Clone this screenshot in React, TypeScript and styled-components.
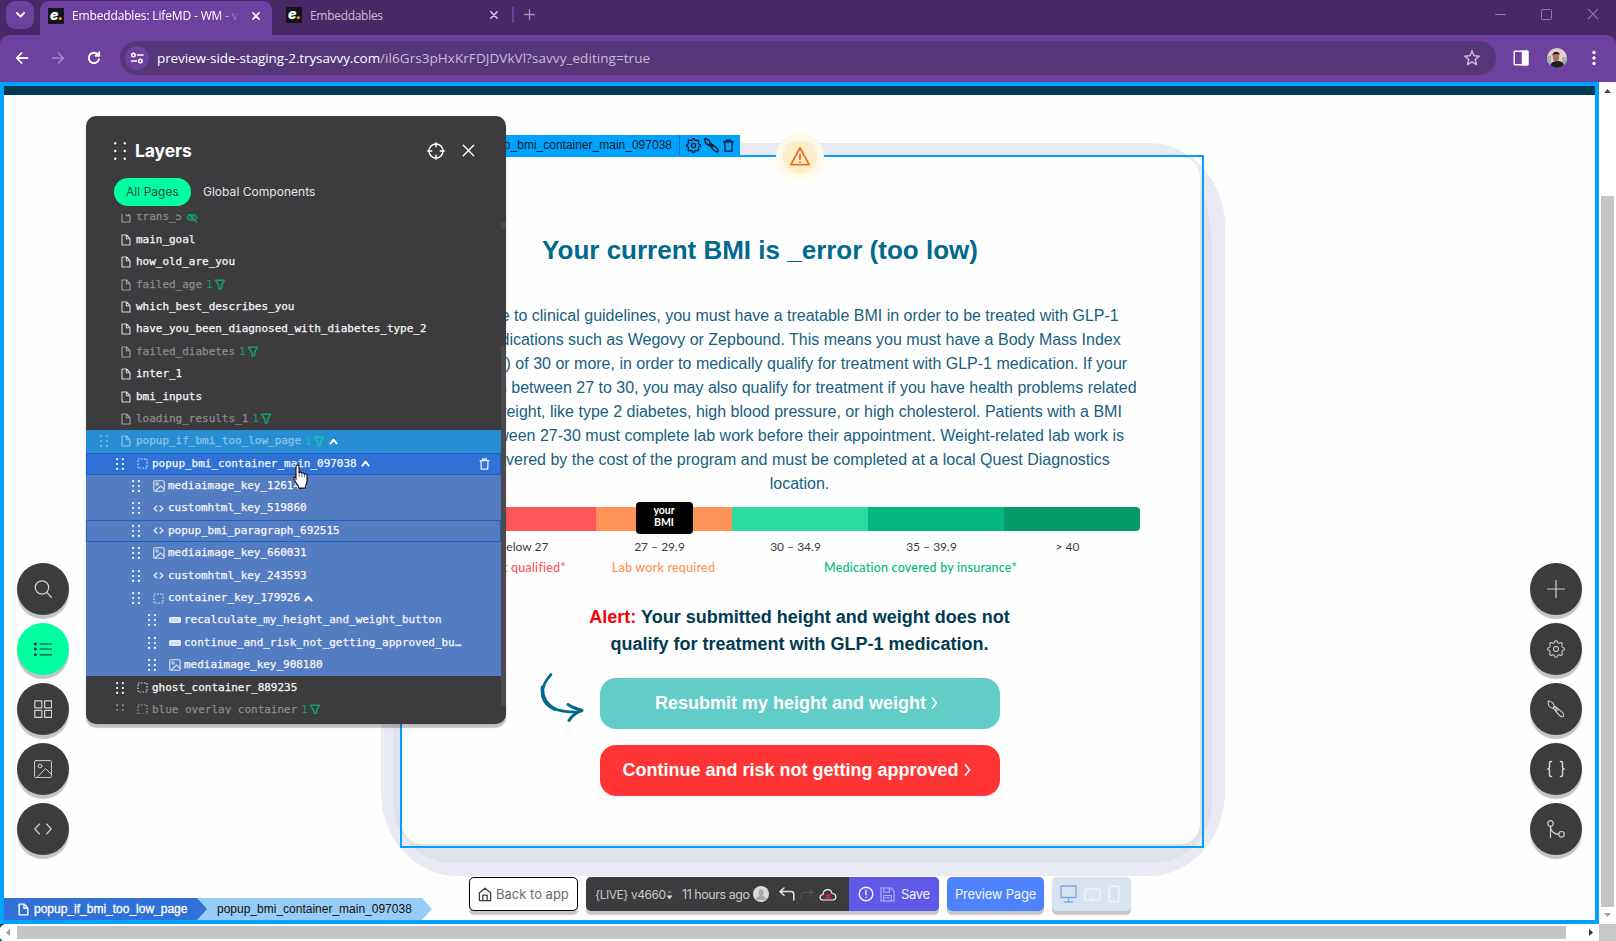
import React from "react";
import styled, { createGlobalStyle, css } from "styled-components";

const BLUE = "#00a2ff";
const DARK = "#3c3c3e";

const Global = createGlobalStyle`
  * { box-sizing: border-box; }
  html, body { margin: 0; padding: 0; background: #fff; overflow: hidden; }
  svg { display: block; flex: none; }
`;

const Window = styled.div`
  width: 1616px;
  height: 941px;
  display: flex;
  flex-direction: column;
  background: #fefefe;
  font-family: "Liberation Sans", Arial, sans-serif;
  overflow: hidden;
`;

/* ---------- Browser chrome ---------- */

const TabStrip = styled.div`
  height: 35px;
  display: flex;
  align-items: flex-start;
  background: #472967;
  padding-left: 6px;
  font-family: "Open Sans", "Noto Sans", sans-serif;
  font-size: 12px;
`;

const TabSearch = styled.div`
  width: 28px;
  height: 28px;
  margin: 1px 6px 0 0;
  border-radius: 9px;
  background: #6e409f;
  display: flex;
  align-items: center;
  justify-content: center;
`;

const Tab = styled.div<{ $active?: boolean }>`
  height: ${(p) => (p.$active ? 34 : 30)}px;
  width: ${(p) => (p.$active ? 232 : 226)}px;
  margin-top: ${(p) => (p.$active ? 1 : 0)}px;
  margin-left: ${(p) => (p.$active ? 0 : 7)}px;
  padding: ${(p) => (p.$active ? "0 12px 5px 8px" : "0 7px 0 7px")};
  display: flex;
  align-items: center;
  color: ${(p) => (p.$active ? "#fff" : "#c9bfd4")};
  background: ${(p) => (p.$active ? "#6e409f" : "transparent")};
  border-radius: 9px 9px 0 0;
`;

const Favicon = styled.div`
  width: 16px;
  height: 16px;
  background: #11151c;
  color: #fff;
  font: italic 900 14px/13px "Inter", sans-serif;
  padding-left: 2px;
  letter-spacing: -0.5px;
  span { color: #ffa51f; }
`;

const TabTitle = styled.div<{ $fade?: boolean }>`
  flex: 1;
  margin-left: 8px;
  white-space: nowrap;
  overflow: hidden;
  letter-spacing: ${(p) => (p.$fade ? -0.15 : -0.3)}px;
  ${(p) =>
    p.$fade &&
    css`
      flex: none;
      width: 172px;
      mask-image: linear-gradient(90deg, #000 145px, transparent 170px);
    `}
`;

const TabSpacer = styled.div`
  flex: 1;
`;

const NewTab = styled.div`
  display: flex;
  align-items: center;
  height: 29px;
  margin-left: 7px;
  gap: 10px;
`;

const Divider = styled.i`
  width: 2px;
  height: 16px;
  background: #6e409f;
`;

const WindowControls = styled.div`
  margin-left: auto;
  margin-right: 17px;
  height: 28px;
  display: flex;
  align-items: center;
  gap: 35px;
`;

const Toolbar = styled.div`
  height: 47px;
  display: flex;
  align-items: center;
  background: #6e409f;
  border-radius: 9px 9px 0 0;
  padding: 0 20px 1px 14px;
`;

const ToolbarBack = styled.div`
  background: #472967;
`;

const NavIcons = styled.div`
  display: flex;
  gap: 20px;
  align-items: center;
`;

const Omnibox = styled.div`
  margin-left: 18px;
  width: 1376px;
  height: 34px;
  border-radius: 17px;
  background: #55387a;
  display: flex;
  align-items: center;
  padding: 0 15px 0 5px;
`;

const SiteInfo = styled.div`
  width: 24px;
  height: 24px;
  border-radius: 50%;
  background: #6e409f;
  display: flex;
  align-items: center;
  justify-content: center;
`;

const Url = styled.div`
  flex: 1;
  margin-left: 8px;
  color: #fff;
  font: 13.5px "Open Sans", "Noto Sans", sans-serif;
  letter-spacing: -0.1px;
  span { color: #c8bcd6; letter-spacing: 0.06px; }
`;

const ToolbarRight = styled.div`
  flex: 1;
  display: flex;
  align-items: center;
  justify-content: flex-end;
`;

const ProfilePhoto = styled.svg`
  margin: 0 25px 0 18px;
`;

/* ---------- Viewport and scrollbars ---------- */

const Viewport = styled.div`
  flex: 1;
  display: grid;
  grid-template-columns: 1599px 17px;
  grid-template-rows: 842px 17px;
`;

const Frame = styled.div`
  position: relative;
  border: 4px solid ${BLUE};
  background: #fefefe;
  overflow: hidden;
`;

const TopStrip = styled.div`
  height: 9px;
  background: #003b50;
`;

const VScroll = styled.div`
  padding: 7px 2px 0;
  display: flex;
  flex-direction: column;
  align-items: center;
  background: #fff;
`;

const VThumb = styled.div`
  width: 13px;
  height: 711px;
  margin: 103px 0 6px;
  background: #c3c4c6;
`;

const HScroll = styled.div`
  display: flex;
  align-items: center;
  background: radial-gradient(circle at 8px 9px, #fff 9px, transparent 10px) 0 0 / 8px 17px no-repeat,
    linear-gradient(90deg, #0b5a49 8px, #fff 8px);
`;

const HThumb = styled.div`
  width: 1549px;
  height: 13px;
  margin: 0 23px 0 7px;
  background: #c3c4c6;
`;

const HArrow = styled.svg<{ $lead?: boolean }>`
  margin-left: ${(p) => (p.$lead ? 6 : 0)}px;
`;

const Grip = styled.div`
  background: #c6c7c9;
`;

/* ---------- Popup card ---------- */

const Stage = styled.div`
  display: flex;
  justify-content: center;
  padding: 48px 0 0 7px;
`;

const Halo = styled.div`
  width: 844px;
  height: 733px;
  padding: 12px 13px 13px 12px;
  border-radius: 76px / 84px;
  background: #e9eaf3;
`;

const HaloInner = styled.div`
  height: 708px;
  padding: 0 8px 15px 7px;
  border-radius: 40px 40px 60px 60px / 100px 100px 60px 60px;
  background: #dfe1eb;
`;

const Selection = styled.div`
  position: relative;
  height: 693px;
  border: 2px solid ${BLUE};
  padding: 0 2px 2px 0;
`;

const Card = styled.div`
  height: 100%;
  border-radius: 20px;
  background: #fefefe;
  padding: 76px 3px 0 0;
  display: flex;
  flex-direction: column;
  align-items: center;
`;

const SelectionTag = styled.div`
  position: absolute;
  right: 462px;
  top: -22px;
  height: 20px;
  display: flex;
  align-items: center;
  background: ${BLUE};
  color: #061d2c;
  font-size: 12px;
  padding-left: 9px;
`;

const TagIcons = styled.div`
  height: 20px;
  margin-left: 7px;
  padding: 0 5px 0 6px;
  border-left: 1px solid #0b6fb0;
  display: flex;
  align-items: center;
  gap: 3px;
`;

const WarningBadge = styled.div`
  position: absolute;
  left: 374px;
  top: -24px;
  width: 48px;
  height: 48px;
  border-radius: 50%;
  border: 7px solid #fff9e8;
  background: #fdedcb;
  display: flex;
  align-items: center;
  justify-content: center;
`;

const Title = styled.h1`
  margin: 0 79px 0 0;
  font-size: 26px;
  line-height: 34px;
  font-weight: 700;
  color: #006a8d;
  white-space: nowrap;
`;

const Paragraph = styled.p`
  margin: 37px 0 11px;
  text-align: center;
  font-size: 16px;
  line-height: 24px;
  color: #176180;
  white-space: pre;
`;

const Scale = styled.div`
  position: relative;
  width: 680px;
  height: 24px;
  display: flex;
  border-radius: 4px;
  overflow: visible;
`;

const Segment = styled.div<{ $color: string }>`
  flex: 1;
  background: ${(p) => p.$color};
  &:first-child { border-radius: 4px 0 0 4px; }
  &:nth-child(5) { border-radius: 0 4px 4px 0; }
`;

const Marker = styled.div`
  position: absolute;
  left: 176px;
  top: -5px;
  width: 57px;
  height: 32px;
  border-radius: 4px;
  background: #000;
  color: #fff;
  font: 700 10.5px/12px "Lato", sans-serif;
  text-align: center;
  padding-top: 2px;
`;

const Ranges = styled.div`
  width: 680px;
  height: 20px;
  margin-top: 6px;
  display: flex;
  font: 12px/20px "Lato", sans-serif;
  color: #3c3c3e;
`;

const Range = styled.div`
  flex: 1;
  text-align: center;
  padding-right: 8px;
`;

const Notes = styled.div`
  width: 680px;
  height: 20px;
  margin-top: 1px;
  display: flex;
  font: 500 12.5px/20px "Lato", sans-serif;
  letter-spacing: 0.22px;
`;

const Note = styled.div<{ $color: string; $w: number; $shift: number }>`
  width: ${(p) => p.$w}px;
  padding-right: ${(p) => p.$shift}px;
  text-align: center;
  white-space: nowrap;
  color: ${(p) => p.$color};
`;

const Alert = styled.p`
  margin: 26px 0 20px;
  text-align: center;
  font-weight: 700;
  font-size: 18px;
  line-height: 27px;
  color: #003b50;
  span { color: #fb0007; }
`;

const Actions = styled.div`
  position: relative;
  display: flex;
  flex-direction: column;
  gap: 16px;
`;

const Action = styled.div<{ $color: string }>`
  width: 400px;
  height: 51px;
  border-radius: 16px;
  background: ${(p) => p.$color};
  color: #fff;
  font-weight: 700;
  font-size: 18px;
  display: flex;
  align-items: center;
  justify-content: center;
  gap: 5px;
  padding-bottom: 1px;
  padding-right: 6px;
`;

const ArrowDoodle = styled.div`
  position: absolute;
  left: -60px;
  top: -5px;
`;

/* ---------- Layers panel ---------- */

const Panel = styled.div`
  position: absolute;
  left: 82px;
  top: 30px;
  width: 420px;
  height: 608px;
  border-radius: 10px;
  background: ${DARK};
  box-shadow: 0 4px 1px rgba(0, 0, 0, 0.22), 0 1px 3px rgba(0, 0, 0, 0.1);
  font-family: "Inter", sans-serif;
  padding-top: 20px;
`;

const PanelHeader = styled.div`
  height: 29px;
  padding: 0 31px 0 28px;
  display: flex;
  align-items: center;
  color: #fff;
`;

const PanelTitle = styled.div`
  flex: 1;
  margin-left: 9px;
  font-size: 17.5px;
  font-weight: 700;
  letter-spacing: -0.1px;
`;

const HeaderActions = styled.div`
  display: flex;
  align-items: center;
  gap: 17px;
`;

const PanelTabs = styled.div`
  display: flex;
  align-items: center;
  margin: 13px 0 8px 28px;
`;

const PanelTab = styled.div<{ $active?: boolean }>`
  height: 28px;
  line-height: 27px;
  border-radius: 14px;
  padding: 0 12px;
  font-size: 12px;
  letter-spacing: 0.04px;
  background: ${(p) => (p.$active ? "#00ffa0" : "transparent")};
  color: ${(p) => (p.$active ? "#1d4a3c" : "#e4e4e4")};
`;

const LayerArea = styled.div`
  display: flex;
  height: 500px;
`;

const LayerList = styled.div`
  width: 415px;
  overflow: hidden;
`;

const LayerInner = styled.div`
  margin-top: -7.8px;
`;

const LayerTrack = styled.div`
  width: 5px;
  padding-top: 8px;
  &::before {
    content: "";
    display: block;
    height: 7px;
    background: #4a4a4c;
  }
  &::after {
    content: "";
    display: block;
    height: 360px;
    margin-top: 117px;
    background: #4b4b4d;
  }
`;

type Tone = "plain" | "page" | "selected" | "child" | "outlined";
const toneBg: Record<Tone, string> = {
  plain: "transparent",
  page: "#288dd2",
  selected: "#2f71d7",
  child: "#547cc3",
  outlined: "#547cc3",
};

const LayerRow = styled.div<{ $level: number; $tone: Tone; $dim?: boolean }>`
  height: 22.4px;
  padding-left: ${(p) => 14 + 16 * p.$level}px;
  padding-right: 11px;
  display: flex;
  align-items: center;
  font-family: "DejaVu Sans Mono", monospace;
  font-size: 11px;
  letter-spacing: -0.02px;
  white-space: nowrap;
  background: ${(p) => toneBg[p.$tone]};
  color: ${(p) => (p.$tone === "page" ? "#8cc3ea" : p.$dim ? "#8b8b8c" : "#f6f6f6")};
  box-shadow: ${(p) =>
    p.$tone === "selected" || p.$tone === "outlined" ? "inset 0 0 0 1px #1f5fc4" : "none"};
`;

const RowDots = styled.div`
  width: 21px;
`;

const RowIcon = styled.div<{ $dim?: boolean }>`
  width: 15px;
  opacity: ${(p) => (p.$dim ? 0.55 : 0.85)};
  color: #f2f2f2;
`;

const RowName = styled.span`
  line-height: 22px;
  -webkit-text-stroke: 0.25px currentColor;
`;

const Condition = styled.span<{ $bright?: boolean }>`
  margin-left: 4px;
  display: flex;
  align-items: center;
  color: ${(p) => (p.$bright ? "#13c4b0" : "#179b6d")};
  gap: 1px;
`;

const RowCaret = styled.span`
  margin-left: 4px;
  color: #fff;
`;

const RowTrash = styled.span`
  margin-left: auto;
  color: #e8effb;
`;

/* ---------- Floating controls ---------- */

const FabColumn = styled.div<{ $side: "left" | "right" }>`
  position: absolute;
  top: 477px;
  ${(p) => p.$side}: 13px;
  display: flex;
  flex-direction: column;
  gap: 8px;
`;

const Fab = styled.div<{ $active?: boolean }>`
  width: 52px;
  height: 52px;
  border-radius: 50%;
  background: ${(p) => (p.$active ? "#00ffa0" : DARK)};
  color: ${(p) => (p.$active ? "#1f3d33" : "#d2d2d4")};
  box-shadow: 0 4px 1px rgba(0, 0, 20, 0.23);
  display: flex;
  align-items: center;
  justify-content: center;
`;

const BottomBar = styled.div`
  position: absolute;
  left: 465px;
  top: 791px;
  height: 34px;
  display: flex;
  gap: 8px;
  font-family: "Inter", sans-serif;
  font-size: 13px;
  letter-spacing: -0.3px;
`;

const barShadow = "0 4px 1px rgba(0, 0, 20, 0.22)";

const BackButton = styled.div`
  width: 109px;
  border: 1px solid #000;
  border-radius: 5px;
  background: #fff;
  color: #6a6a6e;
  display: flex;
  align-items: center;
  gap: 4px;
  padding-left: 8px;
  box-shadow: ${barShadow};
  white-space: nowrap;
  letter-spacing: 0;
`;

const VersionBar = styled.div`
  width: 353px;
  display: flex;
  border-radius: 5px;
  overflow: hidden;
  background: ${DARK};
  color: #c9c9cb;
`;

const VersionShadow = styled.div`
  border-radius: 5px;
  box-shadow: ${barShadow};
  display: flex;
`;

const VersionInfo = styled.div`
  width: 263px;
  display: flex;
  align-items: center;
  padding-left: 9px;
  white-space: nowrap;
`;

const VersionName = styled.span`
  width: 71px;
  font-size: 12px;
  letter-spacing: -0.45px;
`;

const Ago = styled.span`
  width: 71px;
  margin-left: 9px;
  font-size: 12.5px;
  letter-spacing: -0.45px;
`;

const HistoryIcons = styled.div`
  display: flex;
  align-items: center;
  gap: 5px;
`;

const Avatar = styled.div`
  width: 16px;
  height: 16px;
  border-radius: 50%;
  overflow: hidden;
  margin-right: 10px;
`;

const SaveButton = styled.div`
  flex: 1;
  display: flex;
  align-items: center;
  background: #5f59e8;
  color: #f3f2ff;
  gap: 6px;
  padding-left: 9px;
`;

const PreviewButton = styled.div`
  width: 97px;
  border-radius: 5px;
  background: #4f83fd;
  color: #f1f5ff;
  display: flex;
  align-items: center;
  justify-content: center;
  box-shadow: ${barShadow};
  white-space: nowrap;
  letter-spacing: -0.2px;
`;

const Devices = styled.div`
  width: 79px;
  border-radius: 5px;
  background: #d9e3ef;
  display: flex;
  align-items: center;
  gap: 7px;
  padding-left: 8px;
  box-shadow: ${barShadow};
`;

const Breadcrumbs = styled.div`
  position: absolute;
  left: 0;
  bottom: 0;
  height: 22px;
  display: flex;
  font-size: 12px;
  line-height: 22px;
`;

const Crumb = styled.div<{ $primary?: boolean }>`
  width: ${(p) => (p.$primary ? 203 : 235)}px;
  margin-left: ${(p) => (p.$primary ? 0 : -10)}px;
  padding-left: ${(p) => (p.$primary ? 14 : 20)}px;
  z-index: ${(p) => (p.$primary ? 2 : 1)};
  display: flex;
  align-items: center;
  gap: 5px;
  background: ${(p) => (p.$primary ? "#2f71d7" : "#98cbf5")};
  color: ${(p) => (p.$primary ? "#fff" : "#111")};
  ${(p) => p.$primary && "-webkit-text-stroke: 0.3px #fff;"}
  clip-path: polygon(0 0, calc(100% - 10px) 0, 100% 50%, calc(100% - 10px) 100%, 0 100%);
`;

const Pointer = styled.div`
  position: absolute;
  left: 289px;
  top: 378px;
`;

/* ---------- Icons ---------- */

type IcoProps = {
  size?: number;
  w?: number;
  h?: number;
  box?: string;
  sw?: number;
  fill?: string;
  color?: string;
  children: React.ReactNode;
};
const Ico = ({ size = 16, w, h, box = "0 0 16 16", sw = 1, fill = "none", color, children }: IcoProps) => (
  <svg
    width={w ?? size}
    height={h ?? size}
    viewBox={box}
    fill={fill}
    stroke={color ?? "currentColor"}
    strokeWidth={sw}
    strokeLinecap="round"
    strokeLinejoin="round"
  >
    {children}
  </svg>
);

const CloseIcon = ({ s = 8, sw = 1.5, color = "#fff" }) => (
  <Ico size={s} box="0 0 10 10" sw={sw} color={color}>
    <path d="M1 1l8 8M9 1l-8 8" />
  </Ico>
);

const Dots = ({ w = 8, h = 13, r = 1.1, color = "#fff" }) => (
  <svg width={w} height={h} viewBox={`0 0 ${w} ${h}`} fill={color}>
    {[r, h / 2, h - r].map((y) => (
      <React.Fragment key={y}>
        <circle cx={r} cy={y} r={r} />
        <circle cx={w - r} cy={y} r={r} />
      </React.Fragment>
    ))}
  </svg>
);

const PageIcon = () => (
  <Ico w={10} h={12} box="0 0 10 12" sw={1.1}>
    <path d="M1 1h4.6L9 4.6V11H1zM5.4 1.2v3.6H9" />
  </Ico>
);
const BoxIcon = () => (
  <svg width="11" height="11" viewBox="0 0 11 11" fill="none" stroke="currentColor" strokeWidth="1.2" strokeDasharray="1.6 1.4">
    <rect x="1" y="1" width="9" height="9" />
  </svg>
);
const ImageIcon = ({ s = 12 }) => (
  <Ico size={s} box="0 0 12 12" sw={1.1}>
    <rect x="0.8" y="0.8" width="10.4" height="10.4" rx="1.2" />
    <circle cx="4" cy="4" r="1.2" />
    <path d="M2.2 11L7.6 6l3.4 3.2" />
  </Ico>
);
const CodeIcon = () => (
  <Ico w={11} h={9} box="0 0 11 9" sw={1.6}>
    <path d="M3.8 2L1.2 4.5l2.6 2.5M7.2 2l2.6 2.5L7.2 7" />
  </Ico>
);
const ButtonIcon = () => (
  <svg width="12" height="6" viewBox="0 0 12 6">
    <rect x="0.8" y="0.8" width="10.4" height="4.4" rx="0.6" fill="#e3eaf7" stroke="#fff" strokeWidth="1.6" />
  </svg>
);
const FunnelIcon = () => (
  <Ico w={12} h={11} box="0 0 12 11" sw={1.6}>
    <path d="M1.4 1.2h9.2L7.600 6v3l-2.200 1.200L4.600 6z" />
  </Ico>
);
const HiddenIcon = () => (
  <Ico w={12} h={11} box="0 0 12 11" sw={1.5}>
    <path d="M1 5.5C3 1.6 9 1.6 11 5.5 9 9.4 3 9.4 1 5.5zM1.6 1l9 9" />
    <circle cx="6" cy="5.5" r="1.4" />
  </Ico>
);
const CaretUp = () => (
  <Ico w={9} h={7} box="0 0 8 6" sw={1.7}>
    <path d="M1.2 4.8L4 1.400l2.800 3.400" />
  </Ico>
);
const TrashIcon = ({ w = 11, h = 12 }) => (
  <Ico w={w} h={h} box="0 0 11 12" sw={1.3}>
    <path d="M1 2.6h9M3.6 2.4V1h3.8v1.4M2 2.8l.3 8.4h6.400L9 2.8" />
  </Ico>
);
const gearPath = (() => {
  const pts: string[] = [];
  for (let i = 0; i < 32; i++) {
    const a = ((i - 0.5) / 32) * Math.PI * 2;
    const r = i % 4 < 2 ? 7.4 : 5.8;
    pts.push(`${(8 + r * Math.cos(a)).toFixed(2)} ${(8 + r * Math.sin(a)).toFixed(2)}`);
  }
  return `M${pts.join("L")}Z`;
})();
const GearIcon = ({ s = 18, sw = 0.9 }) => (
  <Ico size={s} sw={sw}>
    <path d={gearPath} />
    <circle cx="8" cy="8" r="2.2" />
  </Ico>
);
const BrushIcon = ({ s = 18, sw = 0.9 }) => (
  <Ico size={s} sw={sw}>
    <path d="M1 .8c3.200 .4 5.200 1.800 5.400 4.800L5.200 7.400C2.400 6.900 .7 4.500 1 .8z" />
    <path d="M5.600 7.300l1.500-1.500 2.800 2-2 2.300zM9.700 7.900c3 1.800 5.200 3.800 5.200 5.600 0 1-.6 1.500-1.500 1.300-2-.5-3.600-2.100-5.300-4.500zM7 8.600l1.300-1.200" />
  </Ico>
);
const FabIcon = ({ children, sw = 1 }: { children: React.ReactNode; sw?: number }) => (
  <Ico size={18} box="0 0 18 18" sw={sw}>
    {children}
  </Ico>
);

/* ---------- Data ---------- */

type Kind = "page" | "box" | "image" | "code" | "button";
type Layer = {
  name: string;
  kind: Kind;
  level?: number;
  tone?: Tone;
  dim?: boolean;
  cond?: boolean;
  hidden?: boolean;
  open?: boolean;
};
const layers: Layer[] = [
  { name: "trans_5", kind: "page", dim: true, hidden: true },
  { name: "main_goal", kind: "page" },
  { name: "how_old_are_you", kind: "page" },
  { name: "failed_age", kind: "page", dim: true, cond: true },
  { name: "which_best_describes_you", kind: "page" },
  { name: "have_you_been_diagnosed_with_diabetes_type_2", kind: "page" },
  { name: "failed_diabetes", kind: "page", dim: true, cond: true },
  { name: "inter_1", kind: "page" },
  { name: "bmi_inputs", kind: "page" },
  { name: "loading_results_1", kind: "page", dim: true, cond: true },
  { name: "popup_if_bmi_too_low_page", kind: "page", dim: true, tone: "page", cond: true, open: true },
  { name: "popup_bmi_container_main_097038", kind: "box", level: 1, tone: "selected", open: true },
  { name: "mediaimage_key_126144", kind: "image", level: 2, tone: "child" },
  { name: "customhtml_key_519860", kind: "code", level: 2, tone: "child" },
  { name: "popup_bmi_paragraph_692515", kind: "code", level: 2, tone: "outlined" },
  { name: "mediaimage_key_660031", kind: "image", level: 2, tone: "child" },
  { name: "customhtml_key_243593", kind: "code", level: 2, tone: "child" },
  { name: "container_key_179926", kind: "box", level: 2, tone: "child", open: true },
  { name: "recalculate_my_height_and_weight_button", kind: "button", level: 3, tone: "child" },
  { name: "continue_and_risk_not_getting_approved_bu…", kind: "button", level: 3, tone: "child" },
  { name: "mediaimage_key_908180", kind: "image", level: 3, tone: "child" },
  { name: "ghost_container_889235", kind: "box", level: 1 },
  { name: "blue_overlay_container", kind: "box", level: 1, dim: true, cond: true },
];
const kindIcon: Record<Kind, React.ReactNode> = {
  page: <PageIcon />,
  box: <BoxIcon />,
  image: <ImageIcon />,
  code: <CodeIcon />,
  button: <ButtonIcon />,
};

const LayersPanel = () => (
  <Panel>
    <PanelHeader>
      <Dots w={12} h={18} r={1.2} />
      <PanelTitle>Layers</PanelTitle>
      <HeaderActions>
        <Ico size={18} box="0 0 18 18" sw={1.4}>
          <circle cx="9" cy="9" r="7" />
          <path d="M9 .8v4M9 13.200v4M.8 9h4M13.200 9h4" />
        </Ico>
        <CloseIcon s={13} sw={1.1} />
      </HeaderActions>
    </PanelHeader>
    <PanelTabs>
      <PanelTab $active>All Pages</PanelTab>
      <PanelTab>Global Components</PanelTab>
    </PanelTabs>
    <LayerArea>
      <LayerList>
        <LayerInner>
          {layers.map((l) => (
            <LayerRow key={l.name} $level={l.level ?? 0} $tone={l.tone ?? "plain"} $dim={l.dim}>
              <RowDots>
                {(l.level || l.tone) && <Dots h={12} color={l.dim ? (l.tone ? "#7fbce8" : "#8b8b8c") : "#fff"} />}
              </RowDots>
              <RowIcon $dim={l.dim}>{kindIcon[l.kind]}</RowIcon>
              <RowName>{l.name}</RowName>
              {l.hidden && (
                <Condition>
                  <HiddenIcon />
                </Condition>
              )}
              {l.cond && (
                <Condition $bright={l.tone === "page"}>
                  1<FunnelIcon />
                </Condition>
              )}
              {l.open && (
                <RowCaret>
                  <CaretUp />
                </RowCaret>
              )}
              {l.tone === "selected" && (
                <RowTrash>
                  <TrashIcon />
                </RowTrash>
              )}
            </LayerRow>
          ))}
        </LayerInner>
      </LayerList>
      <LayerTrack />
    </LayerArea>
  </Panel>
);

const Chrome = () => (
  <>
    <TabStrip>
      <TabSearch>
        <Ico w={9} h={6} box="0 0 9 6" sw={1.8} color="#fff">
          <path d="M1 1l3.500 3.500L8 1" />
        </Ico>
      </TabSearch>
      <Tab $active>
        <Favicon>
          e<span>.</span>
        </Favicon>
        <TabTitle $fade>Embeddables: LifeMD - WM - v</TabTitle>
        <TabSpacer />
        <CloseIcon s={8} sw={2} />
      </Tab>
      <Tab>
        <Favicon>
          e<span>.</span>
        </Favicon>
        <TabTitle>Embeddables</TabTitle>
        <CloseIcon s={8} sw={2} color="#d4cade" />
      </Tab>
      <NewTab>
        <Divider />
        <Ico size={11} box="0 0 11 11" sw={1.3} color="#a596b8">
          <path d="M5.500 .6v9.800M.6 5.500h9.800" />
        </Ico>
      </NewTab>
      <WindowControls>
        <Ico size={11} box="0 0 11 11" color="#8f7da8">
          <path d="M.5 5.500h10" />
        </Ico>
        <Ico size={11} box="0 0 11 11" color="#8f7da8">
          <rect x=".5" y=".5" width="10" height="10" rx="1" />
        </Ico>
        <CloseIcon s={12} sw={0.9} color="#8f7da8" />
      </WindowControls>
    </TabStrip>
    <ToolbarBack>
      <Toolbar>
        <NavIcons>
          <Ico box="0 0 16 16" sw={1.8} color="#fff">
            <path d="M13.500 8H3M7.500 3L2.700 8l4.800 5" />
          </Ico>
          <Ico box="0 0 16 16" sw={1.6} color="#a78bc8">
            <path d="M2.500 8H13M8.500 3l4.800 5-4.800 5" />
          </Ico>
          <Ico box="0 0 16 16" sw={1.9} color="#fff">
            <path d="M13 9.200A5.200 5.200 0 1 1 12 4.600M13.200 2.200v3.600H9.600" />
          </Ico>
        </NavIcons>
        <Omnibox>
          <SiteInfo>
            <Ico size={14} box="0 0 14 14" sw={1.6} color="#fff">
              <circle cx="3.400" cy="4" r="1.700" />
              <circle cx="10.400" cy="10" r="1.700" />
              <path d="M7.500 4H13M1.500 10h5" />
            </Ico>
          </SiteInfo>
          <Url>
            preview-side-staging-2.trysavvy.com<span>/il6Grs3pHxKrFDJDVkVl?savvy_editing=true</span>
          </Url>
          <Ico size={18} box="0 0 18 18" sw={1.4} color="#c9bdd8">
            <path d="M9 1.800l2 5 5.300.3-4.100 3.400 1.400 5.200L9 12.800l-4.600 2.900 1.400-5.200L1.700 7.100 7 6.800z" />
          </Ico>
        </Omnibox>
        <ToolbarRight>
          <Ico size={16} sw={1.400} color="#fff">
            <rect x="1.200" y="1.200" width="13.600" height="13.600" rx="1" />
            <path d="M9.500 1.200h5.300v13.600H9.500z" fill="#fff" />
          </Ico>
          <ProfilePhoto width="20" height="20" viewBox="0 0 20 20">
            <defs>
              <clipPath id="face">
                <circle cx="10" cy="10" r="10" />
              </clipPath>
            </defs>
            <g clipPath="url(#face)">
              <path fill="#e3cfca" d="M0 0h20v20H0z" />
              <path fill="#a9b0a0" d="M0 8h4v8H0zM15 9h5v7h-5z" />
              <path fill="#1d1f24" d="M3 20c0-5 3-7 7-7 4 0 7 1 8 7z" />
              <ellipse cx="9" cy="9" rx="3.200" ry="4.400" fill="#a87460" />
              <path fill="#241d1c" d="M5.200 8c0-5.500 7.500-5.500 7.500-1L11 6 6.200 6.600z" />
            </g>
          </ProfilePhoto>
          <svg width="4" height="16" viewBox="0 0 4 16" fill="#fff">
            <circle cx="2" cy="2.500" r="1.700" />
            <circle cx="2" cy="8" r="1.700" />
            <circle cx="2" cy="13.500" r="1.700" />
          </svg>
        </ToolbarRight>
      </Toolbar>
    </ToolbarBack>
  </>
);

const ActionChevron = () => (
  <Ico w={7} h={12} box="0 0 7 12" sw={1.700}>
    <path d="M1.500 1l4 5-4 5" />
  </Ico>
);

const PopupCard = () => (
  <Stage>
    <Halo>
      <HaloInner>
        <Selection>
          <Card>
            <Title>Your current BMI is _error (too low)</Title>
            <Paragraph>
              {[
                "Due to clinical guidelines, you must have a treatable BMI in order to be treated with GLP-1",
                "medications such as Wegovy or Zepbound. This means you must have a Body Mass Index",
                "(BMI) of 30 or more, in order to medically qualify for treatment with GLP-1 medication. If your",
                "BMI is between 27 to 30, you may also qualify for treatment if you have health problems related",
                "to weight, like type 2 diabetes, high blood pressure, or high cholesterol. Patients with a BMI",
                "between 27-30 must complete lab work before their appointment. Weight-related lab work is",
                "covered by the cost of the program and must be completed at a local Quest Diagnostics",
                "location.",
              ].join("\n")}
            </Paragraph>
            <Scale>
              {["#ff5659", "#ff9357", "#2cdba0", "#03b77e", "#069a6b"].map((c) => (
                <Segment key={c} $color={c} />
              ))}
              <Marker>
                your
                <br />
                BMI
              </Marker>
            </Scale>
            <Ranges>
              {["Below 27", "27 – 29.9", "30 – 34.9", "35 – 39.9", "> 40"].map((r) => (
                <Range key={r}>{r}</Range>
              ))}
            </Ranges>
            <Notes>
              <Note $color="#ff5659" $w={136} $shift={3}>Not qualified*</Note>
              <Note $color="#ff9357" $w={136} $shift={0}>Lab work required</Note>
              <Note $color="#03b77e" $w={408} $shift={30}>Medication covered by insurance*</Note>
            </Notes>
            <Alert>
              <span>Alert:</span> Your submitted height and weight does not
              <br />
              qualify for treatment with GLP-1 medication.
            </Alert>
            <Actions>
              <Action $color="#62ccc8">
                Resubmit my height and weight <ActionChevron />
              </Action>
              <Action $color="#ff3535">
                Continue and risk not getting approved <ActionChevron />
              </Action>
              <ArrowDoodle>
                <svg width="44" height="50" viewBox="0 0 44 50" fill="none" stroke="#006a8d" strokeLinecap="round">
                  <path d="M11 1.500C4 9 1 17 3 25c3 9 13 14 33 14" strokeWidth="2.600" />
                  <path d="M2.600 14c-1 9 3 17 12 22" strokeWidth="3.600" />
                  <path d="M28 31.500c4 3 9 4.500 14 6-6 2-10 5-13 10" strokeWidth="3" strokeLinejoin="round" />
                </svg>
              </ArrowDoodle>
            </Actions>
          </Card>
          <WarningBadge>
            <Ico size={22} box="0 0 22 22" sw={1.800} color="#e2741c">
              <path d="M11 2L1.800 18.600h18.400z" />
              <path d="M11 8.500v4.500M11 15.800v.1" />
            </Ico>
          </WarningBadge>
          <SelectionTag>
            popup_bmi_container_main_097038
            <TagIcons>
              <GearIcon s={15} sw={1.400} />
              <BrushIcon s={15} sw={1.500} />
              <TrashIcon w={13} h={13} />
            </TagIcons>
          </SelectionTag>
        </Selection>
      </HaloInner>
    </Halo>
  </Stage>
);

const Controls = () => (
  <>
    <FabColumn $side="left">
      <Fab>
        <FabIcon sw={1.200}>
          <circle cx="8" cy="7.500" r="6.700" />
          <path d="M12.800 12.300l4.700 5.200" />
        </FabIcon>
      </Fab>
      <Fab $active>
        <FabIcon sw={1.200}>
          <path d="M6 4h12M6 9h12M6 14.800h12" />
          <g fill="currentColor">
            <circle cx="1.300" cy="4" r=".9" />
            <circle cx="1.300" cy="9" r=".9" />
            <circle cx="1.300" cy="14.800" r=".9" />
          </g>
        </FabIcon>
      </Fab>
      <Fab>
        <FabIcon sw={1.200}>
          <rect x=".8" y=".8" width="7" height="7" />
          <rect x="10.600" y=".8" width="7" height="7" />
          <rect x=".8" y="10.400" width="7" height="7" />
          <rect x="10.600" y="10.400" width="7" height="7" />
        </FabIcon>
      </Fab>
      <Fab>
        <FabIcon>
          <rect x=".6" y=".6" width="16.800" height="17" rx="1" />
          <circle cx="6" cy="6" r="1.900" />
          <path d="M3 17.500l8.500-9 6 6" />
        </FabIcon>
      </Fab>
      <Fab>
        <FabIcon sw={1.100}>
          <path d="M5.500 4L.8 9l4.700 5M12.500 4l4.700 5-4.700 5" />
        </FabIcon>
      </Fab>
    </FabColumn>
    <FabColumn $side="right">
      <Fab>
        <FabIcon sw={1.200}>
          <path d="M9 .5v17M.5 9h17" />
        </FabIcon>
      </Fab>
      <Fab>
        <GearIcon />
      </Fab>
      <Fab>
        <BrushIcon />
      </Fab>
      <Fab>
        <FabIcon sw={1.500}>
          <path d="M4.500 1.500H4c-1 0-1.500.5-1.500 1.500v4c0 1.200-.5 2-1.700 2 1.200 0 1.700.8 1.700 2v4c0 1 .5 1.500 1.500 1.500h.5M13.500 1.500h.5c1 0 1.500.5 1.500 1.500v4c0 1.200.5 2 1.700 2-1.200 0-1.700.8-1.700 2v4c0 1-.5 1.500-1.500 1.500h-.5" />
        </FabIcon>
      </Fab>
      <Fab>
        <FabIcon sw={1.200}>
          <circle cx="3.500" cy="3.500" r="2.800" />
          <circle cx="14.500" cy="14.300" r="2.800" />
          <path d="M3.500 6.500v11M3.500 8c1 3.500 3 6 8 6.300" />
        </FabIcon>
      </Fab>
    </FabColumn>
    <BottomBar>
      <BackButton>
        <Ico w={14} h={15} box="0 0 14 15" sw={1.300} color="#3c3c3e">
          <path d="M1.400 5.800L7 1.200l5.600 4.600V13.600H1.400zM4.800 13.400V8.200h4.400v5.200" />
        </Ico>
        Back to app
      </BackButton>
      <VersionShadow>
        <VersionBar>
          <VersionInfo>
            <VersionName>{"{LIVE} v4660"}</VersionName>
            <svg width="7" height="11" viewBox="0 0 7 11">
              <path d="M1 4l2.500-3L6 4z" fill="#707073" />
              <path d="M.5 6.500h6l-3 4z" fill="#d8d8da" />
            </svg>
            <Ago>11 hours ago</Ago>
            <Avatar>
              <svg width="16" height="16" viewBox="0 0 16 16">
                <path fill="#d9d9db" d="M0 0h16v16H0z" />
                <path fill="#a9a9ac" d="M8 3a3 3.500 0 0 1 1.500 6.200c0 1.500 4 1.500 4 4.800h-11c0-3.300 4-3.300 4-4.800A3 3.500 0 0 1 8 3z" />
              </svg>
            </Avatar>
            <HistoryIcons>
              <Ico w={16} h={14} box="0 0 16 14" sw={1.500} color="#e2e2e4">
                <path d="M5 1L1 4.600l4 3.600M1.400 4.600H12c2 0 2.800 1 2.800 2.700V13" />
              </Ico>
              <Ico w={14} h={13} box="0 0 16 14" sw={1} color="#5d5d60">
                <path d="M11 1l4 3.600-4 3.600M14.600 4.600H4c-2 0-2.800 1-2.800 2.700V13" />
              </Ico>
              <Ico w={18} h={13} box="0 0 18 13" sw={1.200} color="#f2f2f2">
                <path d="M4 12C0 12 0 7 4 6.500 4.500 .5 12 0 13 5.500c5 0 5 6.500 1 6.500z" />
                <path d="M7 6.500l3.600 3.600M10.600 6.500L7 10.100" stroke="#f0184c" strokeWidth="1.600" />
              </Ico>
            </HistoryIcons>
          </VersionInfo>
          <SaveButton>
            <Ico size={16} sw={1.400}>
              <circle cx="8" cy="8" r="6.800" />
              <path d="M8 4.200v4.600M8 11.500v.1" />
            </Ico>
            <Ico size={15} sw={1.100} color="#b9b5f5">
              <path d="M1 1h10.500L15 4.500V15H1zM4 1v4.500h6V1M4 15V9h8v6M6 11.500h4" />
            </Ico>
            Save
          </SaveButton>
        </VersionBar>
      </VersionShadow>
      <PreviewButton>Preview Page</PreviewButton>
      <Devices>
        <Ico w={17} h={18} box="0 0 17 18" sw={1.300} color="#78a6ea">
          <path d="M1 1h15v11.500H1zM8.500 12.500V17M4.500 17h8" />
        </Ico>
        <Ico w={17} h={13} box="0 0 17 13" sw={1.100} color="#f6f9fd">
          <rect x="1" y="1" width="15" height="11" rx="1.500" />
          <path d="M8 9.800h1.200" />
        </Ico>
        <Ico w={12} h={18} box="0 0 11 17" sw={1.100} color="#f6f9fd">
          <rect x="1" y="1" width="9" height="15" rx="1.500" />
          <path d="M5 13.800h1" />
        </Ico>
      </Devices>
    </BottomBar>
    <Breadcrumbs>
      <Crumb $primary>
        <Ico w={11} h={13} box="0 0 10 12" sw={1.300} color="#fff">
          <path d="M1 1h4.600L9 4.600V11H1zM5.400 1.200v3.600H9" />
        </Ico>
        popup_if_bmi_too_low_page
      </Crumb>
      <Crumb>popup_bmi_container_main_097038</Crumb>
    </Breadcrumbs>
  </>
);

const App = () => (
  <Window>
    <Global />
    <Chrome />
    <Viewport>
      <Frame>
        <TopStrip />
        <PopupCard />
        <Controls />
        <LayersPanel />
        <Pointer>
          <svg width="15" height="25" viewBox="0 0 15 25">
            <path
              d="M3 15.500V2.600C3 .4 6 .4 6 2.600v6.200c.6-1.200 2.600-.8 2.800.5.8-.9 2.500-.4 2.600.9 1-.7 2.600 0 2.600 1.500v5.300c0 2-1 3.500-1.600 5.500v1.600H5.600v-1.600C4 20 1.600 16.500 .8 14.600c-.5-1.600 1.200-2 2.200-.7z"
              fill="#fff"
              stroke="#111"
              strokeWidth="1.100"
              strokeLinejoin="round"
            />
            <path d="M6.200 9v4M8.900 10v3.200M11.500 11v2.500" stroke="#555" strokeWidth=".8" />
          </svg>
        </Pointer>
      </Frame>
      <VScroll>
        <svg width="7" height="4" viewBox="0 0 7 4">
          <path d="M0 4l3.500-4L7 4z" fill="#484848" />
        </svg>
        <VThumb />
        <svg width="7" height="4" viewBox="0 0 7 4">
          <path d="M0 0h7L3.500 4z" fill="#a2a2a4" />
        </svg>
      </VScroll>
      <HScroll>
        <HArrow $lead width="4" height="7" viewBox="0 0 4 7">
          <path d="M4 0v7L0 3.500z" fill="#9a9a9c" />
        </HArrow>
        <HThumb />
        <HArrow width="4" height="7" viewBox="0 0 4 7">
          <path d="M0 0v7l4-3.500z" fill="#333" />
        </HArrow>
      </HScroll>
      <Grip />
    </Viewport>
  </Window>
);

export default App;
